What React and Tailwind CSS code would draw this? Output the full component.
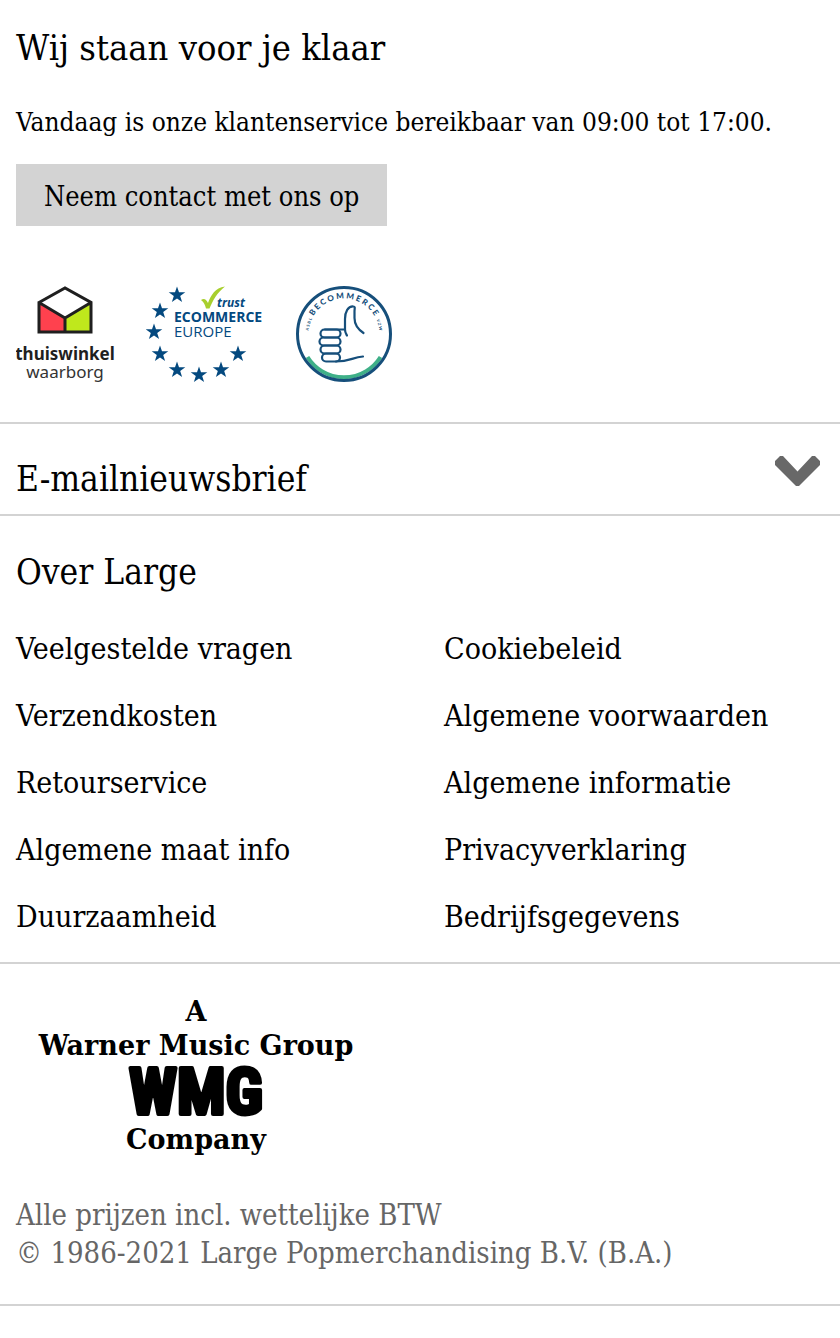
const columns = [
  ['Veelgestelde vragen', 'Verzendkosten', 'Retourservice', 'Algemene maat info', 'Duurzaamheid'],
  ['Cookiebeleid', 'Algemene voorwaarden', 'Algemene informatie', 'Privacyverklaring', 'Bedrijfsgegevens'],
];

const stars = [
  [31, 9], [14, 25], [8, 46], [14, 68], [31, 84], [53, 89], [75, 84], [92, 68],
];

function ThuiswinkelLogo() {
  return (
    <svg width="100" height="96" viewBox="0 0 100 96" role="img" aria-label="thuiswinkel waarborg">
      <path d="M23 16.500 49 32v14H23z" fill="#ff414e" />
      <path d="M75 16.500 49 32v14h26z" fill="#bfe81c" />
      <path d="M23 16.500 49 2l26 14.500V46H23zM23 16.500 49 32l26-15.500M49 32v14" fill="none" stroke="#1f1f1f" strokeWidth="3" />
      <text x="49" y="74" textAnchor="middle" fill="#1f1f1f" className="font-['Noto_Sans',sans-serif] text-[17px] font-bold">thuiswinkel</text>
      <text x="49" y="92" textAnchor="middle" fill="#333" className="font-['Noto_Sans',sans-serif] text-[17px]">waarborg</text>
    </svg>
  );
}

function EcommerceLogo() {
  return (
    <svg width="120" height="96" viewBox="0 0 120 96" role="img" aria-label="trust Ecommerce Europe">
      {stars.map(([x, y]) => (
        <path key={`${x}-${y}`} transform={`translate(${x} ${y})`} d="M0-8.500 2-2.700H8.300L3.200 1 5.100 7 0 3.400-5.100 7-3.200 1-8.300-2.700H-2z" fill="#04497f" />
      ))}
      <path d="M55 14c3-2 5-1 7 3C65 9 69 2 79 .500 71 7 67 14 63.500 22.500H60C59 19 58 16 55 14z" fill="#a8cf2d" />
      <text x="71" y="21" fill="#04497f" className="font-['Open_Sans','Noto_Sans',sans-serif] text-[12px] font-bold italic">trust</text>
      <text x="28" y="36" fill="#04497f" className="font-['Open_Sans','Noto_Sans',sans-serif] text-[14px] font-bold">ECOMMERCE</text>
      <text x="28" y="51" fill="#04497f" className="font-['Open_Sans','Noto_Sans',sans-serif] text-[15px]">EUROPE</text>
    </svg>
  );
}

function BecommerceLogo() {
  return (
    <svg width="96" height="96" viewBox="0 0 96 96" role="img" aria-label="BeCommerce">
      <defs>
        <path id="badge-arc" d="M12.500 48a35.500 35.500 0 0 1 71 0" />
      </defs>
      <path d="M11.500 71a43 43 0 0 0 73 0" fill="none" stroke="#3fb088" strokeWidth="4" />
      <circle cx="48" cy="48" r="46.500" fill="none" stroke="#164f7b" strokeWidth="3" />
      <text fill="#164f7b" textAnchor="middle" className="font-['Lato',sans-serif] text-[8px] font-black">
        <textPath href="#badge-arc" startOffset="50%">B E C O M M E R C E</textPath>
      </text>
      <text fill="#164f7b" className="font-['Lato',sans-serif] text-[4px] font-bold">
        <textPath href="#badge-arc" startOffset="3%">A S B L</textPath>
      </text>
      <text fill="#164f7b" textAnchor="end" className="font-['Lato',sans-serif] text-[4px] font-bold">
        <textPath href="#badge-arc" startOffset="97%">V Z W</textPath>
      </text>
      <g fill="none" stroke="#164f7b" strokeWidth="2.200" strokeLinecap="round" strokeLinejoin="round">
        <rect x="24.500" y="43.500" width="20" height="8" rx="4" />
        <rect x="23.500" y="51.500" width="21" height="8" rx="4" />
        <rect x="24.500" y="59.500" width="20" height="8" rx="4" />
        <rect x="26" y="67.500" width="18" height="8" rx="4" />
        <path d="M29 43.500h20V33C49 26 52 20 57.500 20.500c2 0 1 2 1 5V32c0 7 3 11 9 15M49 43.500c0 3 1 4 2 6M40 75.500c14 0 16-4 27-5" />
      </g>
    </svg>
  );
}

function WarnerLogo() {
  return (
    <svg width="356" height="160" viewBox="0 0 356 160" role="img" aria-label="A Warner Music Group WMG Company">
      <g textAnchor="middle" fill="#000">
        <text x="180" y="25" className="font-['DejaVu_Serif',serif] text-[27px] font-bold">A</text>
        <text x="180" y="59" className="font-['DejaVu_Serif',serif] text-[27px] font-bold">Warner Music Group</text>
        <text x="180" y="118" stroke="#000" strokeWidth="4" strokeLinejoin="round" className="font-['Roboto_Condensed','Roboto',sans-serif] text-[64px] font-bold">WMG</text>
        <text x="180" y="153" className="font-['DejaVu_Serif',serif] text-[27px] font-bold">Company</text>
      </g>
    </svg>
  );
}

export default function App() {
  return (
    <footer className="bg-white font-['Roboto_Slab','DejaVu_Serif_Condensed','DejaVu_Serif',serif] text-black">
      <section className="border-b-2 border-[#d3d3d3] px-4 pt-6 pb-10">
        <h2 className="text-[36px] leading-[48px]">Wij staan voor je klaar</h2>
        <p className="mt-8 text-[26px] leading-9">Vandaag is onze klantenservice bereikbaar van 09:00 tot 17:00.</p>
        <button type="button" className="mt-6 h-[62px] bg-[#d3d3d3] px-7 pt-1 text-[27px]">Neem contact met ons op</button>
        <div className="mt-[60px] flex items-center gap-[30px]">
          <ThuiswinkelLogo />
          <EcommerceLogo />
          <BecommerceLogo />
        </div>
      </section>

      <section className="border-b-2 border-[#d3d3d3]">
        <h2>
          <button type="button" aria-expanded="false" className="flex h-[90px] w-full items-center justify-between pt-5 pr-5 pl-4 text-left text-[35px]">
            <span>E-mailnieuwsbrief</span>
            <svg width="45" height="30" viewBox="0 0 45 30" aria-hidden="true" className="mb-4">
              <path d="M5 0h3L22.500 15.500 37 0h3l5 5v4L24 30h-3L0 9V5z" fill="#686868" />
            </svg>
          </button>
        </h2>
      </section>

      <section className="border-b-2 border-[#d3d3d3] px-4 pt-8 pb-3">
        <h2 className="text-[35px] leading-[48px]">Over Large</h2>
        <nav aria-label="Over Large" className="mt-[19px] grid grid-cols-2 gap-x-12">
          {columns.map((links) => (
            <ul key={links[0]}>
              {links.map((label) => (
                <li key={label} className="flex h-[67px] items-center text-[30px] whitespace-nowrap">
                  <a href="#">{label}</a>
                </li>
              ))}
            </ul>
          ))}
        </nav>
      </section>

      <section className="border-b-2 border-[#d3d3d3] px-4 pt-8 pb-8">
        <WarnerLogo />
        <p className="mt-10 text-[29px] leading-[38px] text-[#666]">
          Alle prijzen incl. wettelijke BTW
          <br />
          © 1986-2021 Large Popmerchandising B.V. (B.A.)
        </p>
      </section>
    </footer>
  );
}
